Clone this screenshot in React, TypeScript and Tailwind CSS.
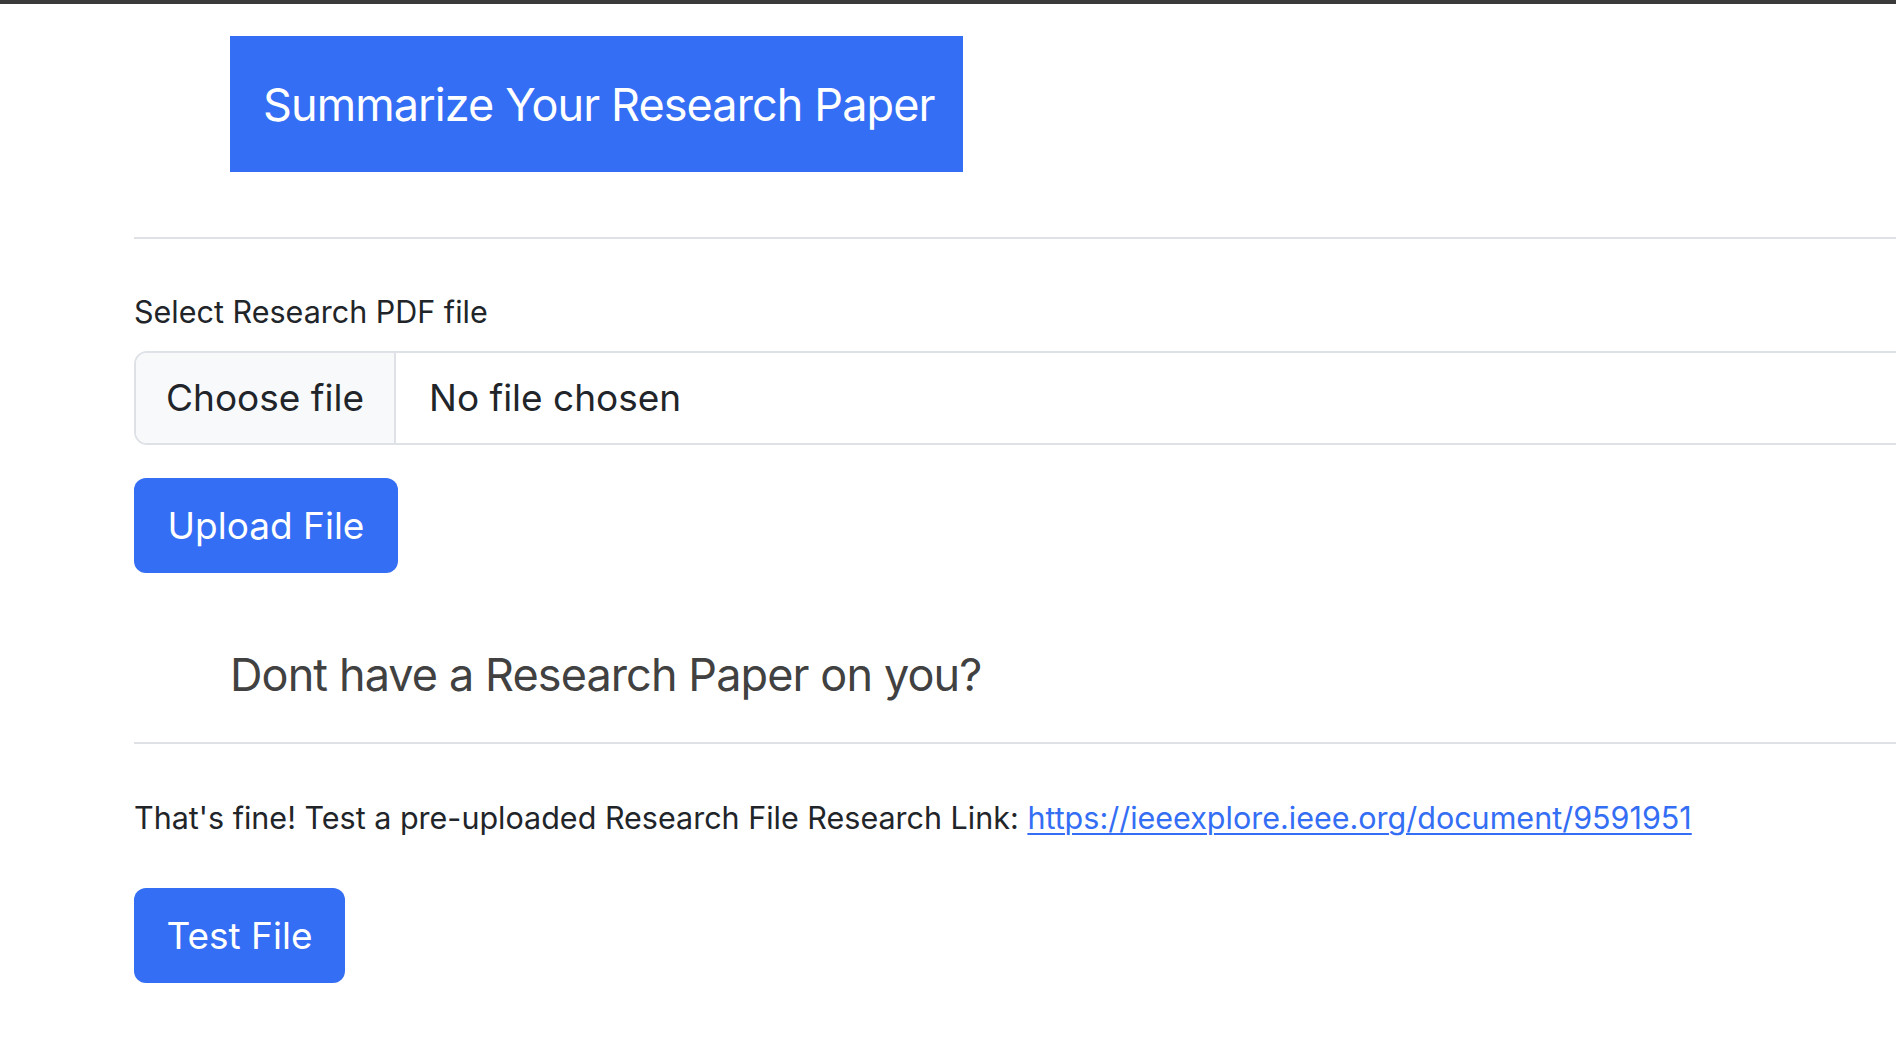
import React from "react";

export default function App() {
  return (
    <div
      className="min-h-screen w-full overflow-hidden bg-white text-[#212529]"
      style={{ fontFamily: "Inter, 'Noto Sans', sans-serif" }}
    >
      <div className="h-[4px] w-full bg-[#3a3a3a]" />
      <div className="pl-[134px]">
        <div className="w-[1800px]">
          <div className="ml-[96px] mt-[32px] flex h-[136px] w-[733px] items-center whitespace-nowrap bg-[#346ef4] pl-[33px] pt-[2px] text-[45px] leading-[56px] tracking-[-0.02em] text-white">
            Summarize Your Research Paper
          </div>
          <div className="mt-[65px] h-[2px] w-full bg-[#dee2e6]" />
          <label className="mt-[51px] block text-[30.5px] leading-[44px]">
            Select Research PDF file
          </label>
          <div className="mt-[17px] flex h-[94px] w-full items-stretch rounded-l-[13px] border-2 border-[#dee2e6]">
            <div className="flex w-[260px] items-center justify-center rounded-l-[11px] border-r-2 border-[#dee2e6] bg-[#f8f9fa] text-[37px]">
              Choose file
            </div>
            <div className="flex items-center pl-[33px] text-[37px]">No file chosen</div>
          </div>
          <button className="mt-[33px] flex h-[95px] w-[264px] items-center justify-center rounded-[12px] bg-[#346ef4] text-[37px] text-white">
            Upload File
          </button>
          <h2 className="ml-[96px] mt-[73px] whitespace-nowrap text-[45px] leading-[58px] tracking-[-0.02em] text-[#414141]">
            Dont have a Research Paper on you?
          </h2>
          <div className="mt-[38px] h-[2px] w-full bg-[#dee2e6]" />
          <p className="mt-[51px] text-[30.5px] leading-[46px]">
            That's fine! Test a pre-uploaded Research File Research Link:{" "}
            <a
              href="#"
              className="text-[#346ef4] underline decoration-[2px] underline-offset-[4px]"
            >
              https://ieeexplore.ieee.org/document/9591951
            </a>
          </p>
          <button className="mt-[47px] flex h-[95px] w-[211px] items-center justify-center rounded-[12px] bg-[#346ef4] text-[37px] text-white">
            Test File
          </button>
        </div>
      </div>
    </div>
  );
}
